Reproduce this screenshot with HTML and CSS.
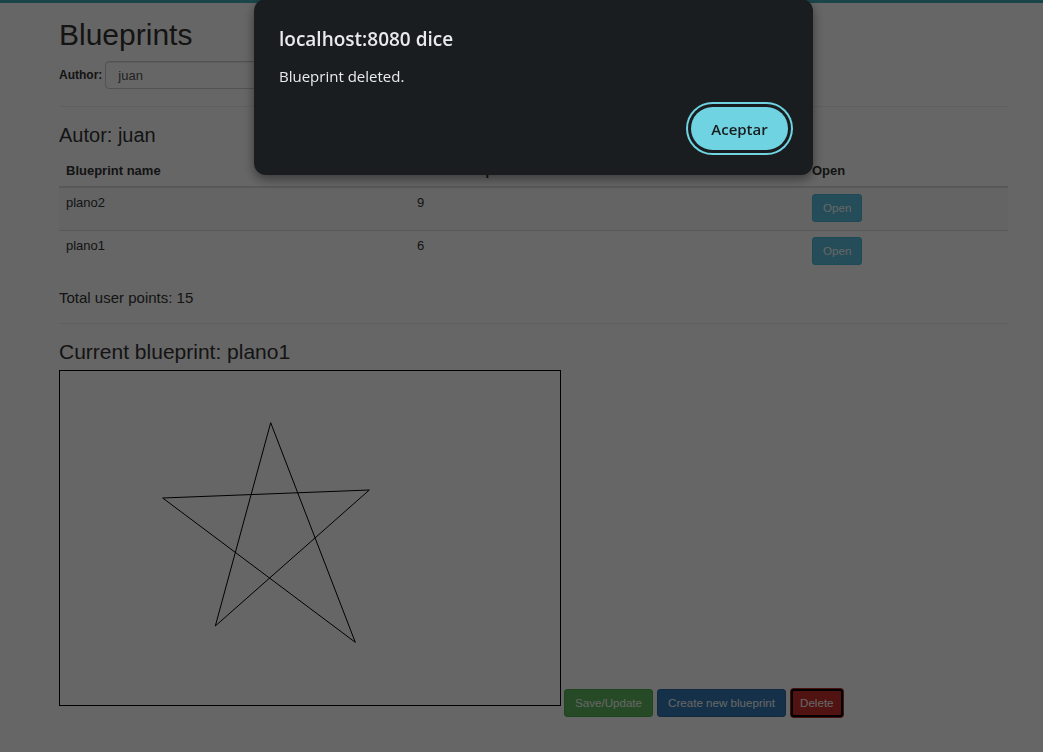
FILE: index.html
```html
<!DOCTYPE html>
<html lang="es">
<head>
<meta charset="utf-8">
<title>Blueprints</title>
<link rel="stylesheet" href="styles.css">
</head>
<body>
<div class="topbar"></div>
<div class="container">
  <h1 class="title">Blueprints</h1>
  <div class="author-form">
    <label class="author-label" for="author">Author:</label>
    <input id="author" class="author-input" type="text" value="juan">
  </div>
  <hr class="divider">
  <h3 class="subtitle">Autor: juan</h3>
  <table class="bp-table">
    <thead>
      <tr><th class="col-name">Blueprint name</th><th class="col-points">Number of points</th><th class="col-open">Open</th></tr>
    </thead>
    <tbody>
      <tr class="striped"><td>plano2</td><td>9</td><td><button class="btn btn-info">Open</button></td></tr>
      <tr><td>plano1</td><td>6</td><td><button class="btn btn-info">Open</button></td></tr>
    </tbody>
  </table>
  <p class="total">Total user points: 15</p>
  <hr class="divider divider-2">
  <h3 class="subtitle current">Current blueprint: plano1</h3>
  <div class="canvas-row">
    <svg class="bp-canvas" width="500" height="334" viewBox="0 0 500 334">
      <polyline points="210.7,51.7 155.3,255 309.3,119 102.7,127 295.3,271.3 210.7,51.7" fill="none" stroke="#000" stroke-width="1"/>
    </svg>
    <button class="btn btn-success">Save/Update</button>
    <button class="btn btn-primary">Create new blueprint</button>
    <button class="btn btn-danger focused">Delete</button>
  </div>
</div>
<div class="overlay"></div>
<div class="dialog" role="alertdialog">
  <div class="dialog-title">localhost:8080 dice</div>
  <div class="dialog-msg">Blueprint deleted.</div>
  <div class="dialog-actions">
    <button class="dialog-btn">Aceptar</button>
  </div>
</div>
</body>
</html>
```
FILE: styles.css
```css
html, body {
  margin: 0;
  padding: 0;
  background: #fff;
  font-family: "Liberation Sans", Arial, Helvetica, sans-serif;
  color: #333;
  font-size: 14px;
}
.topbar {
  height: 3px;
  background: #44aeb6;
}
.container {
  width: 949px;
  padding-left: 59px;
  padding-bottom: 30px;
}
.title {
  font-size: 30px;
  font-weight: 400;
  line-height: 33px;
  margin: 15px 0 10px;
}
.author-form {
  display: flex;
  align-items: center;
  gap: 3px;
}
.author-label {
  font-size: 12px;
  font-weight: 700;
}
.author-input {
  width: 220px;
  height: 28px;
  box-sizing: border-box;
  padding: 4px 12px;
  border: 1px solid #ccc;
  border-radius: 4px;
  font-family: inherit;
  font-size: 13px;
  color: #555;
  box-shadow: inset 0 1px 1px rgba(0,0,0,.075);
}
.divider {
  border: 0;
  border-top: 1px solid #eee;
  margin: 17px 0 17px;
}
.subtitle {
  font-size: 20px;
  font-weight: 400;
  line-height: 22px;
  margin: 0 0 10px;
}
.bp-table {
  width: 949px;
  border-collapse: collapse;
  font-size: 13px;
}
.bp-table th {
  text-align: left;
  padding: 6px 7px 6px;
  border-bottom: 2px solid #ddd;
  line-height: 18px;
}
.col-name { width: 337px; }
.col-points { width: 381px; }
.bp-table td {
  padding: 6px 7px 8px;
  border-top: 1px solid #ddd;
  line-height: 18px;
  vertical-align: top;
}
.bp-table tr.striped td {
  background: #f9f9f9;
}
.btn {
  display: inline-block;
  font-family: inherit;
  font-size: 11.6px;
  line-height: 18px;
  height: 28px;
  box-sizing: border-box;
  padding: 4px 10px;
  border: 1px solid transparent;
  border-radius: 3px;
  color: #fff;
  cursor: pointer;
}
.btn-info { background: #5bc0de; border-color: #46b8da; }
.btn-success { background: #5cb85c; border-color: #4cae4c; }
.btn-primary { background: #337ab7; border-color: #2e6da4; }
.btn-danger { background: #d9534f; border-color: #d43f3a; }
.btn-danger.focused {
  background: #c9302c;
  border: 2px solid #000;
  padding: 3px 7px;
  box-shadow: 0 0 0 1px #ac2925;
}
.total {
  font-size: 15px;
  margin: 16px 0 0;
  line-height: 18px;
}
.divider-2 {
  margin: 16px 0 17px;
}
.current {
  font-size: 21px;
  margin-bottom: 7px;
}
.canvas-row {
  display: flex;
  align-items: flex-end;
  gap: 3px;
}
.canvas-row .btn-primary {
  margin-left: 1px;
}
.canvas-row .btn-danger {
  margin-left: 2px;
}
.bp-canvas {
  display: block;
  border: 1px solid #000;
  background: #fff;
  margin-bottom: 11px;
}
.overlay {
  position: fixed;
  inset: 0;
  background: rgba(0,0,0,.6);
}
.dialog {
  position: fixed;
  top: -1px;
  left: 254px;
  width: 559px;
  height: 176px;
  box-sizing: border-box;
  background: #191d20;
  border-radius: 12px;
  box-shadow: 0 4px 12px rgba(0,0,0,.45);
  padding: 27px 25px 0;
  font-family: "Open Sans", "Noto Sans", sans-serif;
  color: #e8eaed;
  display: flex;
  flex-direction: column;
}
.dialog-title {
  font-size: 19px;
  font-weight: 600;
  line-height: 24px;
  margin-top: 1px;
}
.dialog-msg {
  font-size: 15px;
  line-height: 20px;
  margin-top: 15px;
}
.dialog-actions {
  display: flex;
  justify-content: flex-end;
  margin-top: 21px;
  padding-right: 0;
}
.dialog-btn {
  width: 97px;
  height: 43px;
  border: 0;
  border-radius: 22px;
  background: #6fd3e1;
  color: #191d20;
  font-family: "Open Sans", "Noto Sans", sans-serif;
  font-size: 15px;
  font-weight: 600;
  box-shadow: 0 0 0 3px #191d20, 0 0 0 5px #6fd3e1;
}
```
